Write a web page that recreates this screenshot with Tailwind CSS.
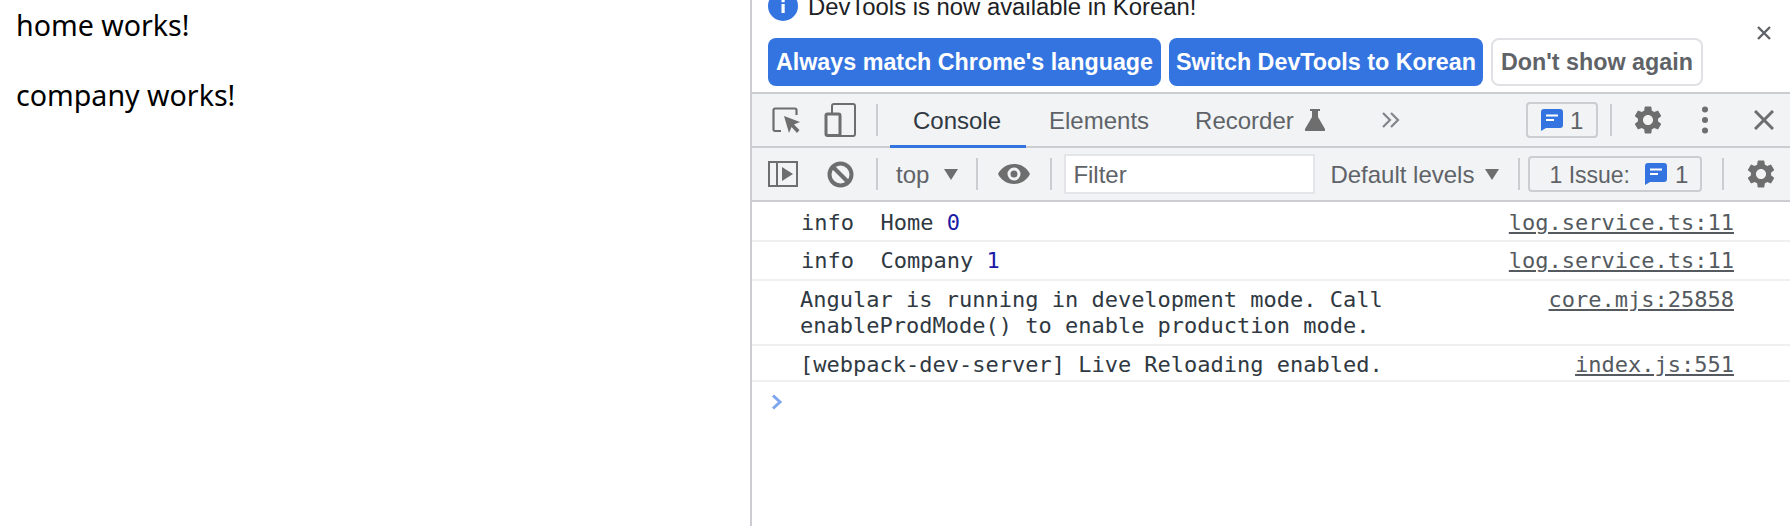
<!DOCTYPE html>
<html><head><meta charset="utf-8"><script src="https://cdn.jsdelivr.net/npm/@tailwindcss/browser@4"></script></head>
<body class="bg-white overflow-hidden">
<div class="flex h-[526px] w-[1790px] overflow-hidden font-['Liberation_Sans',sans-serif]">
  <div class="w-[750px] shrink-0 pl-4 pt-[6px] text-[28.6px] leading-[38px] text-black font-['Noto_Sans',sans-serif]">
    <p>home works!</p>
    <p class="mt-[32px]">company works!</p>
  </div>
  <div class="w-[1040px] shrink-0 border-l-2 border-[#cbcdd1] flex flex-col">
    <div class="h-[92px] relative">
      <div class="flex items-center pl-[16px] -mt-[9px] h-[30px] gap-[10px] text-[23.85px] text-[#202124]">
        <svg class="w-[30px] h-[30px] shrink-0" viewBox="0 0 30 30"><circle cx="15" cy="15" r="15" fill="#3474e0"/><rect x="13.5" y="13" width="3.2" height="9" fill="#fff"/><rect x="13.5" y="8" width="3.2" height="3.2" fill="#fff"/></svg>
        <span class="mt-[2px]">DevTools is now available in Korean!</span>
      </div>
      <div class="flex gap-2 pl-[16px] mt-[17px] text-[23.3px] font-bold">
        <button class="w-[393px] h-[48px] pt-[1px] rounded-[8px] bg-[#3474e0] text-white">Always match Chrome's language</button>
        <button class="w-[314px] h-[48px] pt-[1px] rounded-[8px] bg-[#3474e0] text-white">Switch DevTools to Korean</button>
        <button class="w-[212px] h-[48px] pt-[1px] rounded-[8px] bg-white border-2 border-[#e0e1e5] text-[#5f6368]">Don't show again</button>
      </div>
      <svg class="absolute left-[1005px] top-[26px] w-[14px] h-[14px]" viewBox="0 0 14 14"><path d="M1 1l12 12M13 1L1 13" stroke="#5f6368" stroke-width="2.4"/></svg>
    </div>
    <div class="h-[56px] border-y-2 border-[#cbcdd1] bg-[#f1f3f5] flex items-center relative text-[#5f6368] text-[24px]">
      <svg class="ml-[20px] w-[28px] h-[28px] shrink-0" viewBox="0 0 28 28"><path d="M9 25H3a1.500 1.500 0 0 1-1.500-1.500V4A1.500 1.500 0 0 1 3 2.500h20A1.500 1.500 0 0 1 24.500 4v5" fill="none" stroke="#6e6e6e" stroke-width="2.200"/><path d="M12 10l16 6-6 2.500 5.500 5.500-2.500 3-5.500-6-2.500 6z" fill="#6e6e6e"/></svg>
      <svg class="ml-[24px] w-[32px] h-[34px] shrink-0" viewBox="0 0 32 34"><path d="M8 10V3a2 2 0 0 1 2-2h19a2 2 0 0 1 2 2v28a2 2 0 0 1-2 2H14" fill="none" stroke="#6e6e6e" stroke-width="2"/><rect x="2" y="11" width="14" height="21.500" rx="1.500" fill="none" stroke="#6e6e6e" stroke-width="3"/></svg>
      <div class="ml-[20px] w-[2px] h-[32px] bg-[#cbcdd1]"></div>
      <div class="ml-[12px] w-[136px] h-full relative flex items-center justify-center pt-[2px] pr-[2px] text-[#303942]">Console<div class="absolute left-0 right-0 -bottom-[2px] h-[3px] bg-[#3474e0]"></div></div>
      <span class="ml-[23px] mt-[2px]">Elements</span>
      <span class="ml-[46px] mt-[2px]">Recorder</span>
      <svg class="ml-[11px] w-[20px] h-[22px]" viewBox="0 0 20 22"><path d="M5 0h10v2h-2v6l7 12a1.300 1.300 0 0 1-1 2H1a1.300 1.300 0 0 1-1-2l7-12V2H5z" fill="#6e6e6e"/></svg>
      <svg class="ml-[56px] w-[20px] h-[16px]" viewBox="0 0 20 16"><path d="M2 1l7 7-7 7M10 1l7 7-7 7" fill="none" stroke="#80868b" stroke-width="2.200"/></svg>
      <div class="ml-auto w-[72px] h-[36px] border-2 border-[#cbcdd1] rounded-[4px] flex items-center pl-[13px] gap-[7px] text-[24px] text-[#5f6368]">
        <svg class="w-[22px] h-[22px]" viewBox="0 0 22 22"><path d="M3 0h16a3 3 0 0 1 3 3v13a3 3 0 0 1-3 3H5l-5 3V3a3 3 0 0 1 3-3z" fill="#3474e0"/><path d="M5 6.500h12M5 11h8" stroke="#fff" stroke-width="2"/></svg><span class="mt-[2px]">1</span>
      </div>
      <div class="ml-[12px] w-[2px] h-[32px] bg-[#cbcdd1]"></div>
      <svg class="ml-[22px] w-[28px] h-[28px]" viewBox="2 2 20 20"><path fill="#6e6e6e" d="M19.140 12.940c.04-.3.060-.61.060-.94 0-.32-.02-.64-.07-.94l2.030-1.580a.490.490 0 0 0 .12-.61l-1.920-3.320a.488.488 0 0 0-.59-.22l-2.390.96c-.5-.38-1.030-.7-1.620-.94l-.36-2.540a.484.484 0 0 0-.48-.41h-3.840c-.24 0-.43.170-.47.410l-.36 2.540c-.59.240-1.130.570-1.620.94l-2.390-.96c-.22-.08-.47 0-.59.220L2.740 8.870c-.12.210-.08.470.12.610l2.030 1.580c-.05.3-.09.630-.09.940s.02.640.07.940l-2.030 1.580a.490.490 0 0 0-.12.610l1.920 3.320c.12.220.37.290.59.220l2.390-.96c.5.380 1.030.7 1.620.94l.36 2.540c.05.240.24.410.48.410h3.840c.24 0 .44-.17.470-.41l.36-2.540c.59-.24 1.130-.56 1.620-.94l2.390.96c.22.080.47 0 .59-.22l1.920-3.320c.12-.22.070-.47-.12-.61l-2.010-1.580zM12 15.600c-1.980 0-3.600-1.620-3.600-3.600s1.620-3.600 3.600-3.600 3.600 1.620 3.600 3.600-1.620 3.600-3.600 3.600z"/></svg>
      <svg class="ml-[40px] w-[6px] h-[28px]" viewBox="0 0 6 28"><circle cx="3" cy="3.500" r="3" fill="#6e6e6e"/><circle cx="3" cy="14" r="3" fill="#6e6e6e"/><circle cx="3" cy="24.500" r="3" fill="#6e6e6e"/></svg>
      <svg class="ml-[46px] mr-[16px] w-[20px] h-[20px]" viewBox="0 0 20 20"><path d="M1 1l18 18M19 1L1 19" stroke="#6e6e6e" stroke-width="3"/></svg>
    </div>
    <div class="h-[54px] border-b-2 border-[#cbcdd1] bg-[#f1f3f5] flex items-center text-[#5f6368] text-[24px]">
      <svg class="ml-[16px] w-[30px] h-[26px] shrink-0" viewBox="0 0 30 26"><rect x="1" y="1" width="28" height="24" fill="none" stroke="#6e6e6e" stroke-width="2"/><path d="M9 1v24" stroke="#6e6e6e" stroke-width="2"/><path d="M14 6l11 7-11 7z" fill="#6e6e6e"/></svg>
      <svg class="ml-[29px] w-[27px] h-[27px] shrink-0" viewBox="0 0 27 27"><circle cx="13.500" cy="13.500" r="11" fill="none" stroke="#6e6e6e" stroke-width="4"/><path d="M5.500 5.500l16 16" stroke="#6e6e6e" stroke-width="4"/></svg>
      <div class="ml-[22px] w-[2px] h-[32px] bg-[#cbcdd1]"></div>
      <span class="ml-[18px] mt-[2px]">top</span>
      <svg class="ml-[15px] w-[14px] h-[11px]" viewBox="0 0 14 11"><path d="M0 0h14L7 11z" fill="#6e6e6e"/></svg>
      <div class="ml-[18px] w-[2px] h-[32px] bg-[#cbcdd1]"></div>
      <svg class="ml-[20px] w-[32px] h-[20px]" viewBox="0 0 32 20"><path fill-rule="evenodd" d="M16 0c7 0 13 4 16 10-3 6-9 10-16 10S3 16 0 10C3 4 9 0 16 0zm0 3.500a6.500 6.500 0 1 0 0 13 6.500 6.500 0 0 0 0-13zm0 3a3.500 3.500 0 1 1 0 7 3.500 3.500 0 0 1 0-7z" fill="#6e6e6e"/></svg>
      <div class="ml-[20px] w-[2px] h-[32px] bg-[#cbcdd1]"></div>
      <div class="ml-[12px] w-[251px] h-[40px] bg-white border-2 border-[#e4e5e8] flex items-center pl-[7px] pt-[2px]">Filter</div>
      <span class="ml-[15px] mt-[2px]">Default levels</span>
      <svg class="ml-[11px] w-[14px] h-[11px]" viewBox="0 0 14 11"><path d="M0 0h14L7 11z" fill="#6e6e6e"/></svg>
      <div class="ml-[19px] w-[2px] h-[32px] bg-[#cbcdd1]"></div>
      <div class="ml-[8px] w-[174px] h-[36px] border-2 border-[#cbcdd1] rounded-[4px] flex items-center pl-[19px] gap-[8px]">
        <span class="mr-[7px] mt-[2px] text-[23px]">1 Issue:</span>
        <svg class="w-[22px] h-[22px]" viewBox="0 0 22 22"><path d="M3 0h16a3 3 0 0 1 3 3v13a3 3 0 0 1-3 3H5l-5 3V3a3 3 0 0 1 3-3z" fill="#3474e0"/><path d="M5 6.500h12M5 11h8" stroke="#fff" stroke-width="2"/></svg><span class="mt-[2px]">1</span>
      </div>
      <div class="ml-[20px] w-[2px] h-[32px] bg-[#cbcdd1]"></div>
      <svg class="ml-[23px] w-[28px] h-[28px]" viewBox="2 2 20 20"><path fill="#6e6e6e" d="M19.140 12.940c.04-.3.060-.61.060-.94 0-.32-.02-.64-.07-.94l2.030-1.580a.490.490 0 0 0 .12-.61l-1.920-3.320a.488.488 0 0 0-.59-.22l-2.390.96c-.5-.38-1.030-.7-1.620-.94l-.36-2.540a.484.484 0 0 0-.48-.41h-3.840c-.24 0-.43.170-.47.410l-.36 2.540c-.59.240-1.130.570-1.620.94l-2.390-.96c-.22-.08-.47 0-.59.220L2.740 8.870c-.12.210-.08.470.12.610l2.030 1.580c-.05.3-.09.630-.09.940s.02.640.07.940l-2.030 1.580a.490.490 0 0 0-.12.610l1.920 3.320c.12.220.37.290.59.220l2.390-.96c.5.380 1.030.7 1.620.94l.36 2.540c.05.240.24.410.48.410h3.840c.24 0 .44-.17.470-.41l.36-2.540c.59-.24 1.130-.56 1.620-.94l2.390.96c.22.080.47 0 .59-.22l1.920-3.320c.12-.22.070-.47-.12-.61l-2.010-1.580zM12 15.600c-1.980 0-3.600-1.620-3.600-3.600s1.620-3.600 3.600-3.600 3.600 1.620 3.600 3.600-1.620 3.600-3.600 3.600z"/></svg>
    </div>
    <div class="font-['DejaVu_Sans_Mono',monospace] text-[22px] leading-[26px] text-[#303942]">
      <div class="h-[40px] border-b-2 border-[#f0f0f0] flex justify-between pl-[49px] pr-[56px] pt-[8px]"><span class="whitespace-pre">info  Home <span class="text-[#1a1aa6]">0</span></span><a class="underline text-[#545a60]">log.service.ts:11</a></div>
      <div class="h-[39px] border-b-2 border-[#f0f0f0] flex justify-between pl-[49px] pr-[56px] pt-[6px]"><span class="whitespace-pre">info  Company <span class="text-[#1a1aa6]">1</span></span><a class="underline text-[#545a60]">log.service.ts:11</a></div>
      <div class="h-[65px] border-b-2 border-[#f0f0f0] flex justify-between pl-[48px] pr-[56px] pt-[6px]"><span>Angular is running in development mode. Call<br>enableProdMode() to enable production mode.</span><a class="underline text-[#545a60]">core.mjs:25858</a></div>
      <div class="h-[36px] border-b-2 border-[#f0f0f0] flex justify-between pl-[48px] pr-[56px] pt-[6px]"><span>[webpack-dev-server] Live Reloading enabled.</span><a class="underline text-[#545a60]">index.js:551</a></div>
      <svg class="ml-[19px] mt-[12px] w-[12px] h-[16px]" viewBox="0 0 12 16"><path d="M2 1.500L9 8l-7 6.500" fill="none" stroke="#7ea6f0" stroke-width="3"/></svg>
    </div>
  </div>
</div>
</body></html>
